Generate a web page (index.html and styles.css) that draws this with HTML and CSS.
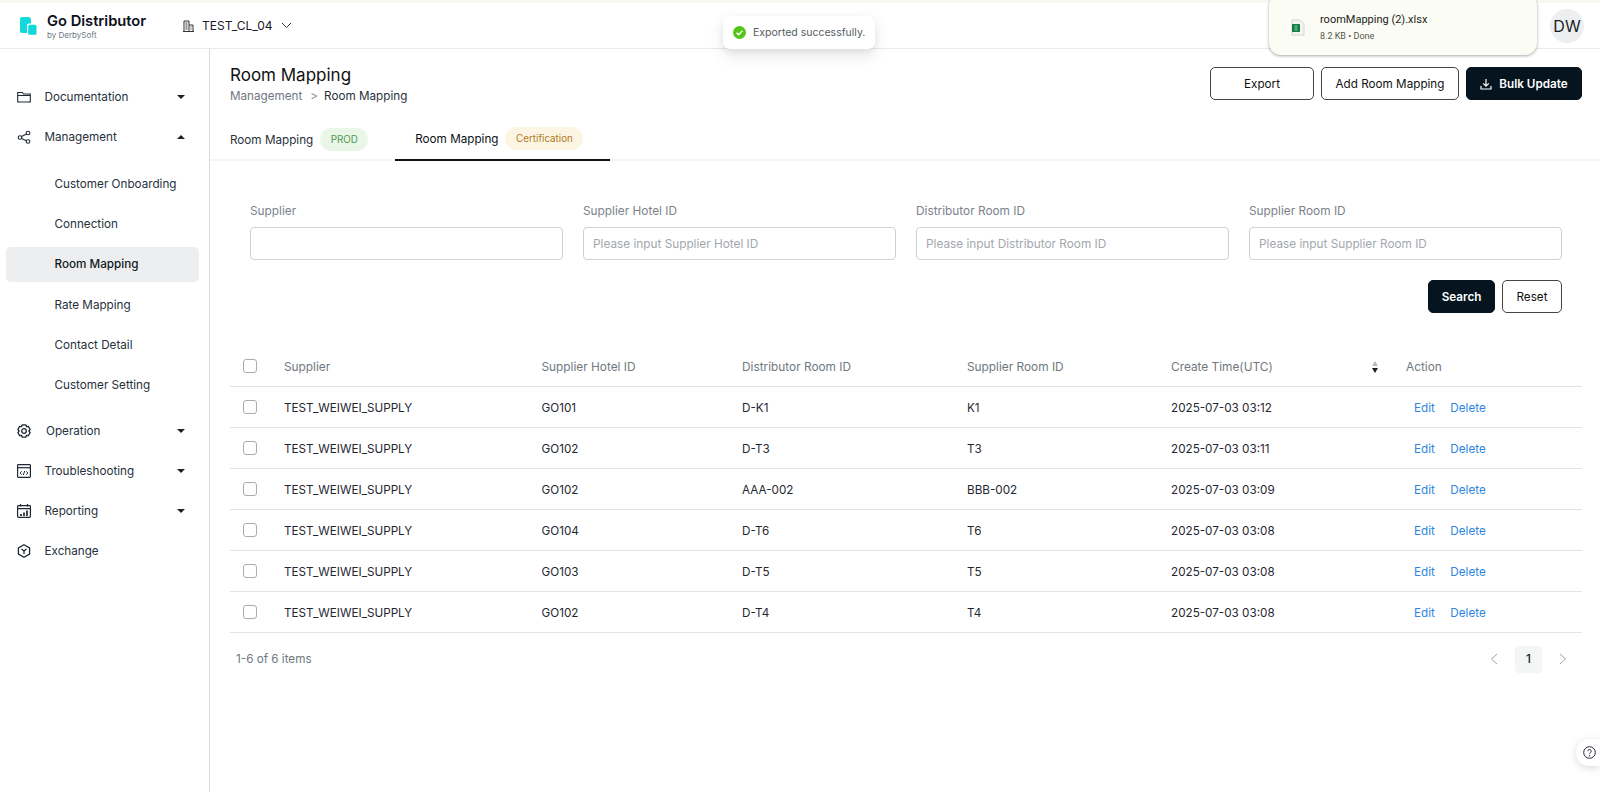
FILE: index.html
```html
<!DOCTYPE html>
<html lang="en">
<head>
<meta charset="utf-8">
<title>Room Mapping</title>
<link rel="stylesheet" href="styles.css">
</head>
<body>
<div class="topband"></div>
<header class="header">
  <div class="brand">
    <svg class="logo" viewBox="0 0 17 18" width="17" height="18"><path d="M0 2a2 2 0 0 1 2-2h6a3 3 0 0 1 3 3v3.500H9a2 2 0 0 0-2 2V16H2a2 2 0 0 1-2-2z" fill="#12d8dc"/><rect x="8.200" y="7.700" width="8.300" height="10" rx="1.500" fill="#12d8dc"/></svg>
    <div class="brand-text"><div class="brand-name">Go Distributor</div><div class="brand-sub">by DerbySoft</div></div>
  </div>
  <div class="tenant">
    <svg width="11" height="12" viewBox="0 0 11 12"><path d="M1 11V1h5v10M6 5h4v6M0 11.500h11M2.500 3h2M2.500 5h2M2.500 7h2M2.500 9h2M7.500 7h1M7.500 9h1" fill="none" stroke="#333" stroke-width="1"/></svg>
    <span>TEST_CL_04</span>
    <svg width="11" height="7" viewBox="0 0 11 7"><path d="M1 1l4.500 4.500L10 1" fill="none" stroke="#333" stroke-width="1"/></svg>
  </div>
  <div class="avatar">DW</div>
</header>
<div class="layout">
  <nav class="sidebar">
    <div class="nav-item">
      <svg class="nav-icon" viewBox="0 0 14 14"><path d="M.7 2.500h4.600l1.200 1.500h6.800v8H.7zM.7 5.500h12.600" fill="none" stroke="#1f2933" stroke-width="1.100"/></svg>
      <span class="nav-label">Documentation</span><span class="caret"></span>
    </div>
    <div class="nav-item">
      <svg class="nav-icon" viewBox="0 0 14 14"><g fill="none" stroke="#1f2933" stroke-width="1.100"><circle cx="3" cy="7.500" r="1.800"/><circle cx="11" cy="3" r="1.800"/><circle cx="11" cy="11.500" r="1.800"/><path d="M4.600 6.600l4.800-2.700M4.600 8.400l4.800 2.300"/></g></svg>
      <span class="nav-label">Management</span><span class="caret up"></span>
    </div>
    <div class="subnav">
      <div class="sub-item">Customer Onboarding</div>
      <div class="sub-item">Connection</div>
      <div class="sub-item active">Room Mapping</div>
      <div class="sub-item">Rate Mapping</div>
      <div class="sub-item">Contact Detail</div>
      <div class="sub-item">Customer Setting</div>
    </div>
    <div class="nav-item">
      <svg class="nav-icon" viewBox="0 0 14 14"><g fill="none" stroke="#1f2933" stroke-width="1.300"><path d="M5.200 .9h3.600l.7 1.700 1.900-.2 1.700 3-1.200 1.600 1.200 1.600-1.700 3-1.900-.2-.7 1.700H5.200l-.7-1.700-1.900.2-1.700-3L2.100 7 .9 5.400l1.700-3 1.900.2z"/><circle cx="7" cy="7" r="2.300"/></g></svg>
      <span class="nav-label op">Operation</span><span class="caret"></span>
    </div>
    <div class="nav-item">
      <svg class="nav-icon" viewBox="0 0 14 14"><g fill="none" stroke="#1f2933" stroke-width="1.200"><rect x=".6" y=".6" width="12.800" height="12.800" rx=".8"/><path d="M.6 3.700h12.800"/><path d="M4.700 7.300L3.200 9l1.500 1.700M9.300 7.300L10.800 9l-1.500 1.700M7.700 7L6.300 11" stroke-width="1"/></g></svg>
      <span class="nav-label">Troubleshooting</span><span class="caret"></span>
    </div>
    <div class="nav-item">
      <svg class="nav-icon" viewBox="0 0 14 14"><g fill="none" stroke="#1f2933" stroke-width="1.200"><rect x=".6" y="1.600" width="12.800" height="11.800" rx=".8"/><path d="M.6 4.700h12.800M3.500 0v2.500M10.500 0v2.500"/><path d="M4 12v-2M7 12V8.500M10 12V6.500" stroke-width="1.700"/></g></svg>
      <span class="nav-label">Reporting</span><span class="caret"></span>
    </div>
    <div class="nav-item">
      <svg class="nav-icon" viewBox="0 0 14 14"><g fill="none" stroke="#1f2933" stroke-width="1.300"><path d="M7 .8l5.600 3.100v6.200L7 13.200 1.400 10.100V3.900z"/><path d="M4.500 4.900L7 7l2.500-2.100M7 7v3"/></g></svg>
      <span class="nav-label">Exchange</span>
    </div>
  </nav>
  <main class="main">
    <div class="page-head">
      <div>
        <h1 class="title">Room Mapping</h1>
        <div class="crumbs"><span class="crumb-muted">Management</span><span class="crumb-sep">&gt;</span><span>Room Mapping</span></div>
      </div>
      <div class="actions">
        <button class="btn export">Export</button>
        <button class="btn add">Add Room Mapping</button>
        <button class="btn primary bulk">
          <svg width="12" height="12" viewBox="0 0 12 12"><path d="M6 1v7M3.200 5.400L6 8.200l2.800-2.800M1 8v3h10V8" fill="none" stroke="#fff" stroke-width="1.200"/></svg>
          Bulk Update
        </button>
      </div>
    </div>
    <div class="tabs">
      <div class="tab"><span>Room Mapping</span><span class="pill green">PROD</span></div>
      <div class="tab active"><span>Room Mapping</span><span class="pill amber">Certification</span></div>
    </div>
    <div class="filters">
      <label class="field"><span class="field-label">Supplier</span><input class="input" type="text"></label>
      <label class="field"><span class="field-label">Supplier Hotel ID</span><input class="input" type="text" placeholder="Please input Supplier Hotel ID"></label>
      <label class="field"><span class="field-label">Distributor Room ID</span><input class="input" type="text" placeholder="Please input Distributor Room ID"></label>
      <label class="field"><span class="field-label">Supplier Room ID</span><input class="input" type="text" placeholder="Please input Supplier Room ID"></label>
    </div>
    <div class="filter-actions">
      <button class="btn primary search">Search</button>
      <button class="btn reset">Reset</button>
    </div>
    <table class="table">
      <colgroup><col class="c-check"><col class="c-sup"><col class="c-hotel"><col class="c-dist"><col class="c-room"><col class="c-time"><col class="c-act"></colgroup>
      <thead>
        <tr>
          <th><span class="check"></span></th>
          <th>Supplier</th><th>Supplier Hotel ID</th><th>Distributor Room ID</th><th>Supplier Room ID</th>
          <th><div class="th-sort"><span>Create Time(UTC)</span><span class="sort"><i class="sort-up"></i><i class="sort-down"></i></span></div></th>
          <th class="th-action">Action</th>
        </tr>
      </thead>
      <tbody>
        <tr><td><span class="check"></span></td><td>TEST_WEIWEI_SUPPLY</td><td>GO101</td><td>D-K1</td><td>K1</td><td>2025-07-03 03:12</td><td class="links"><a>Edit</a><a>Delete</a></td></tr>
        <tr><td><span class="check"></span></td><td>TEST_WEIWEI_SUPPLY</td><td>GO102</td><td>D-T3</td><td>T3</td><td>2025-07-03 03:11</td><td class="links"><a>Edit</a><a>Delete</a></td></tr>
        <tr><td><span class="check"></span></td><td>TEST_WEIWEI_SUPPLY</td><td>GO102</td><td>AAA-002</td><td>BBB-002</td><td>2025-07-03 03:09</td><td class="links"><a>Edit</a><a>Delete</a></td></tr>
        <tr><td><span class="check"></span></td><td>TEST_WEIWEI_SUPPLY</td><td>GO104</td><td>D-T6</td><td>T6</td><td>2025-07-03 03:08</td><td class="links"><a>Edit</a><a>Delete</a></td></tr>
        <tr><td><span class="check"></span></td><td>TEST_WEIWEI_SUPPLY</td><td>GO103</td><td>D-T5</td><td>T5</td><td>2025-07-03 03:08</td><td class="links"><a>Edit</a><a>Delete</a></td></tr>
        <tr><td><span class="check"></span></td><td>TEST_WEIWEI_SUPPLY</td><td>GO102</td><td>D-T4</td><td>T4</td><td>2025-07-03 03:08</td><td class="links"><a>Edit</a><a>Delete</a></td></tr>
      </tbody>
    </table>
    <div class="table-foot">
      <span class="count">1-6 of 6 items</span>
      <div class="pager">
        <svg width="8" height="12" viewBox="0 0 8 12"><path d="M7 1L1.500 6 7 11" fill="none" stroke="#9aa1a8" stroke-width="1"/></svg>
        <span class="page">1</span>
        <svg width="8" height="12" viewBox="0 0 8 12"><path d="M1 1l5.500 5L1 11" fill="none" stroke="#9aa1a8" stroke-width="1"/></svg>
      </div>
    </div>
  </main>
</div>

<div class="toast">
  <svg width="13" height="13" viewBox="0 0 13 13"><circle cx="6.500" cy="6.500" r="6.500" fill="#52c41a"/><path d="M3.500 6.700l2.100 2.100 3.900-4.100" fill="none" stroke="#fff" stroke-width="1.400"/></svg>
  <span>Exported successfully.</span>
</div>
<div class="download">
  <svg width="14" height="17" viewBox="0 0 14 17"><path d="M1 1h8l4 4v11H1z" fill="#f4f4f0" stroke="#c9ccc6" stroke-width=".8"/><rect x="1" y="5" width="8" height="8" rx=".8" fill="#107c41"/><path d="M3.500 7h3M3.500 9h3M3.500 11h3" stroke="#bfe6cf" stroke-width=".8"/></svg>
  <div>
    <div class="dl-name">roomMapping (2).xlsx</div>
    <div class="dl-meta">8.2 KB • Done</div>
  </div>
</div>
<div class="help">
  <svg width="13" height="13" viewBox="0 0 13 13"><circle cx="6.500" cy="6.500" r="5.800" fill="none" stroke="#1f2933" stroke-width="1"/><path d="M4.800 5.200a1.700 1.700 0 1 1 2.600 1.500c-.6.400-.9.700-.9 1.300" fill="none" stroke="#1f2933" stroke-width="1"/><circle cx="6.500" cy="9.800" r=".7" fill="#1f2933"/></svg>
</div>
</body>
</html>
```
FILE: styles.css
```css
* { box-sizing: border-box; }
html, body { margin: 0; height: 792px; overflow: hidden; background: #fff; }
body { position: relative; font-family: Inter, "Liberation Sans", sans-serif; font-size: 11.700px; color: #1a2028; }

.topband { height: 3px; background: #f7f8ef; }
.header { height: 46px; display: flex; align-items: center; padding: 0 16px 0 20px; border-bottom: 1px solid #e9eaea; }
.brand { display: flex; align-items: center; gap: 10px; width: 163px; }
.logo { display: block; }
.brand-text { padding-top: 1px; }
.brand-name { font-size: 14.700px; font-weight: 600; line-height: 17px; color: #0b1118; }
.brand-sub { font-size: 8px; line-height: 10px; color: #6f7780; }
.tenant { display: flex; align-items: center; gap: 8px; font-size: 12px; }
.avatar { margin-left: auto; width: 34px; height: 34px; border-radius: 50%; background: #eceef0; display: flex; align-items: center; justify-content: center; font-size: 16px; color: #1a1f24; }

.layout { display: flex; height: 743px; }
.sidebar { width: 210px; flex: none; padding: 28px 10px 0 6px; border-right: 1px solid #dcdcdc; }
.nav-item { height: 40px; display: flex; align-items: center; padding: 0 11px; }
.nav-icon { width: 14px; height: 14px; flex: none; }
.nav-label { margin-left: 13.500px; color: #27313c; }
.nav-label.op { margin-left: 15px; }
.caret { margin-left: auto; margin-right: 3px; width: 0; height: 0; border-left: 4px solid transparent; border-right: 4px solid transparent; border-top: 4px solid #1a2028; }
.caret.up { border-top: 0; border-bottom: 4px solid #1a2028; }
.subnav { margin: 10px 0 9px; }
.sub-item { height: 34.200px; margin-bottom: 6px; display: flex; align-items: center; padding-left: 48.500px; border-radius: 5px; color: #27313c; }
.sub-item.active { background: #edeeef; color: #121a22; font-weight: 500; }
.sub-item:last-child { margin-bottom: 7px; }

.main { flex: 1; min-width: 0; }
.page-head { display: flex; justify-content: space-between; padding: 16px 18px 0 20px; height: 75px; }
.title { margin: 0; font-size: 17px; font-weight: 400; line-height: 20px; color: #111; }
.crumbs { margin-top: 3px; line-height: 16px; display: flex; color: #27313c; }
.crumb-muted { color: #6f7780; }
.crumb-sep { margin: 0 6px 0 8px; color: #8a9098; }
.actions { display: flex; gap: 7px; margin-top: 2px; }
.btn { height: 33px; border-radius: 5px; border: 1px solid #3e444a; background: #fff; color: #111; font: 400 11.700px Inter, "Liberation Sans", sans-serif; padding: 0; display: flex; align-items: center; justify-content: center; gap: 7px; }
.btn.primary { background: #05141e; border-color: #05141e; color: #fff; font-weight: 600; }
.export { width: 104px; }
.add { width: 138px; }
.bulk { width: 116px; }

.tabs { display: flex; height: 37px; border-bottom: 2px solid #f5f5f5; }
.tab { display: flex; align-items: center; gap: 7px; height: 37px; padding: 0 27px 6px 20px; color: #27313c; }
.tab:first-child { margin-left: 20px; padding-left: 0; }
.tab.active { border-bottom: 2px solid #111; color: #0b1118; }
.pill { height: 23px; border-radius: 12px; display: flex; align-items: center; justify-content: center; font-size: 9.800px; }
.green { width: 48px; background: #e9f6e8; color: #4d9a4d; }
.amber { width: 78px; background: #fdf5e4; color: #b07a1a; }

.filters { display: grid; grid-template-columns: repeat(4, 313px); gap: 20px; padding: 42px 0 0 40px; }
.field { display: flex; flex-direction: column; gap: 8px; }
.field-label { font-size: 11.850px; line-height: 16px; color: #7b828b; }
.input { height: 33px; border: 1px solid #cfd2d5; border-radius: 4px; padding: 0 9px; font: 11.800px Inter, "Liberation Sans", sans-serif; color: #111; background: #fff; outline: 0; }
.input::placeholder { color: #a3a7ad; opacity: 1; }
.filter-actions { display: flex; justify-content: flex-end; gap: 7px; padding: 20px 38px 0 0; }
.search { width: 67px; }
.reset { width: 60px; }

.table { margin: 33px 0 0 20px; width: 1352px; border-collapse: collapse; table-layout: fixed; }
.c-check { width: 44px; }
.c-sup { width: 257.500px; }
.c-hotel { width: 200.500px; }
.c-dist { width: 225px; }
.c-room { width: 204px; }
.c-time { width: 235px; }
.c-act { width: 186px; }
.table th, .table td { height: 41px; padding: 2px 10px 0; text-align: left; font-weight: 400; border-bottom: 1px solid #e1e4e6; }
.table th:first-child, .table td:first-child { padding: 0 0 0 13px; }
.table th { font-size: 11.850px; color: #707880; height: 40px; }
.table td { color: #1f2730; }
.check { display: block; width: 14px; height: 14px; border: 1px solid #a8adb2; border-radius: 3px; }
.th-sort { display: flex; justify-content: space-between; align-items: center; padding-right: 8px; }
.sort { display: flex; flex-direction: column; gap: 2px; }
.sort-up { width: 0; height: 0; border-left: 3.500px solid transparent; border-right: 3.500px solid transparent; border-bottom: 5px solid #b8bcc0; }
.sort-down { width: 0; height: 0; border-left: 3.500px solid transparent; border-right: 3.500px solid transparent; border-top: 5px solid #1a2028; }
.links { padding-left: 18px !important; }
.links a { color: #2e86de; margin-right: 15.500px; }

.table-foot { display: flex; justify-content: space-between; align-items: center; margin: 13px 18px 0 26px; height: 27px; }
.count { color: #6f7780; }
.pager { display: flex; align-items: center; gap: 17px; margin-right: 15px; }
.page { width: 27px; height: 27px; border-radius: 4px; background: #f4f5f5; display: flex; align-items: center; justify-content: center; font-weight: 500; }

.toast { position: absolute; left: 723px; top: 16px; width: 152px; height: 33px; background: #fff; border-radius: 7px; box-shadow: 0 6px 16px rgba(0,0,0,.1), 0 3px 6px rgba(0,0,0,.06); display: flex; align-items: center; gap: 7px; padding-left: 10px; font: 10.500px Inter, "Liberation Sans", sans-serif; color: #555c62; }
.download { position: absolute; left: 1269px; top: -6px; width: 268px; height: 61px; background: #fbfcf3; border-radius: 12px; box-shadow: 0 1px 3px rgba(0,0,0,.35); display: flex; align-items: center; gap: 15px; padding: 6px 0 0 22px; font-family: Roboto, "Liberation Sans", sans-serif; }
.dl-name { font-size: 11px; line-height: 14px; color: #1b1c1a; }
.dl-meta { font-size: 9px; line-height: 12px; margin-top: 3px; color: #55574f; }
.help { position: absolute; right: 0; top: 739px; width: 24px; height: 27px; background: #fff; border-radius: 13px 0 0 13px; box-shadow: 0 2px 8px rgba(0,0,0,.14); display: flex; align-items: center; padding-left: 7px; }
```
